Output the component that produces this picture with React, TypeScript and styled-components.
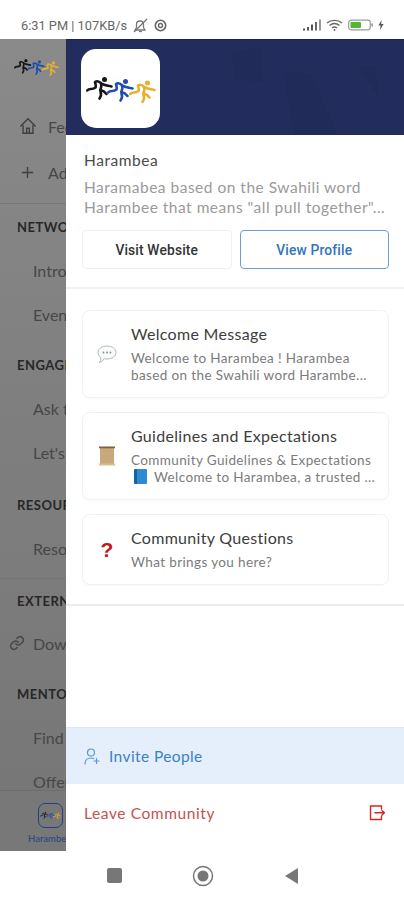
import React from "react";
import styled, { createGlobalStyle } from "styled-components";

const Global = createGlobalStyle`
  html, body { margin: 0; padding: 0; background: #fff; }
  * { box-sizing: border-box; }
  body { font-family: Lato, "Noto Sans", sans-serif; }
`;

const Page = styled.div`
  width: 404px;
  height: 900px;
  display: flex;
  flex-direction: column;
  overflow: hidden;
`;

const StatusBar = styled.div`
  height: 39px;
  flex: none;
  padding: 11px 20px 0 21px;
  display: flex;
  align-items: center;
  justify-content: space-between;
  color: #666;
  font: 400 12.8px Roboto, sans-serif;
`;
const StatusGroup = styled.div`
  display: flex;
  align-items: center;
  gap: 5px;
`;

const Main = styled.div`
  flex: 1;
  display: flex;
  min-height: 0;
`;

const Sidebar = styled.aside`
  width: 66px;
  flex: none;
  background: linear-gradient(180deg, #8a8a8a 0%, #7f7f7f 45%, #767676 100%);
  overflow: hidden;
  display: flex;
  flex-direction: column;
  white-space: nowrap;
  position: relative;
`;
const SideLogo = styled.div`
  height: 56px;
  flex: none;
  padding: 20px 0 0 14px;
`;
const SideTop = styled.div`
  height: 109px;
  flex: none;
  padding-top: 8px;
  border-bottom: 1px solid #787878;
`;
const SideRow = styled.div<{ $h?: number; $indent?: number; $gap?: number }>`
  height: ${(p) => p.$h ?? 44}px;
  flex: none;
  display: flex;
  align-items: center;
  gap: ${(p) => p.$gap ?? 11}px;
  padding-left: ${(p) => p.$indent ?? 33}px;
  font-size: 16px;
  color: #474747;
  svg {
    flex: none;
  }
`;
const SideHeading = styled.div<{ $top: number; $h?: number; $rule?: boolean }>`
  height: ${(p) => p.$h ?? 42}px;
  flex: none;
  margin-top: ${(p) => p.$top}px;
  padding-left: 17px;
  display: flex;
  align-items: center;
  font-size: 13px;
  font-weight: 700;
  letter-spacing: 0.5px;
  color: #272727;
  border-top: ${(p) => (p.$rule ? "1px solid #747474" : "none")};
`;
const SideTabs = styled.div`
  position: absolute;
  left: 0;
  right: 0;
  bottom: 0;
  height: 61px;
  background: #787878;
  border-top: 1px solid #6f6f6f;
`;
const TabIcon = styled.div`
  position: absolute;
  left: 38px;
  top: 12px;
  width: 25px;
  height: 25px;
  border: 1.5px solid #1f3f86;
  border-radius: 7px;
  display: flex;
  align-items: center;
  justify-content: center;
  overflow: hidden;
`;
const TabLabel = styled.div`
  position: absolute;
  left: 28px;
  top: 42px;
  font-size: 9.5px;
  font-weight: 500;
  color: #2c477f;
`;

const Drawer = styled.div`
  flex: 1;
  min-width: 0;
  background: #fff;
  display: flex;
  flex-direction: column;
`;

const Header = styled.div`
  height: 96px;
  flex: none;
  padding: 9px 15px;
  background: #232d5d;
  border-top: 1px solid #1b2350;
  position: relative;
  overflow: hidden;
`;
const HeaderArt = styled.svg`
  position: absolute;
  inset: 0;
  width: 100%;
  height: 100%;
`;
const LogoTile = styled.div`
  position: relative;
  width: 79px;
  height: 79px;
  border-radius: 15px;
  background: #fff;
  padding-top: 3px;
  display: flex;
  align-items: center;
  justify-content: center;
`;

const About = styled.section`
  padding: 16px 15px 0 18px;
  height: 154px;
  flex: none;
  border-bottom: 2px solid #f1f1f1;
`;
const AboutTitle = styled.div`
  font-size: 15.5px;
  line-height: 19px;
  letter-spacing: 0.55px;
  color: #4a4a4a;
`;
const AboutText = styled.div`
  margin-top: 7px;
  font-size: 15.5px;
  line-height: 20px;
  letter-spacing: 0.5px;
  color: #9a9a9a;
  white-space: nowrap;
`;
const ButtonRow = styled.div`
  margin: 13px 0 0 -2px;
  display: flex;
  gap: 8px;
`;
const Button = styled.div<{ $primary?: boolean }>`
  width: 150px;
  height: 39px;
  border-radius: 4px;
  display: flex;
  align-items: center;
  justify-content: center;
  font: 500 13.8px Roboto, sans-serif;
  letter-spacing: 0.15px;
  color: ${(p) => (p.$primary ? "#2f74bd" : "#333")};
  border: ${(p) => (p.$primary ? "1.5px solid #6f9fd0" : "1px solid #f0f0f0")};
`;

const Cards = styled.section`
  height: 317px;
  flex: none;
  padding: 21px 15px 0 16px;
  display: flex;
  flex-direction: column;
  gap: 14px;
  border-bottom: 2px solid #ececec;
`;
const Card = styled.article<{ $h: number }>`
  height: ${(p) => p.$h}px;
  flex: none;
  border: 1px solid #f1f1f1;
  border-radius: 8px;
  display: flex;
  align-items: center;
  padding-left: 13px;
  box-shadow: 0 1px 2px rgba(0, 0, 0, 0.03);
`;
const CardIcon = styled.div`
  width: 22px;
  flex: none;
  margin-right: 13px;
  display: flex;
  justify-content: center;
  font-size: 21px;
  line-height: 1;
`;
const CardBody = styled.div`
  min-width: 0;
  white-space: nowrap;
`;
const CardTitle = styled.div`
  font-size: 16px;
  line-height: 20px;
  letter-spacing: 0.3px;
  color: #3d3d3d;
`;
const CardText = styled.div`
  margin-top: 6px;
  font-size: 13.5px;
  line-height: 17.5px;
  letter-spacing: 0.38px;
  color: #7b7b7b;
`;
const QuestionMark = styled.span`
  font: 700 21px "Liberation Sans", sans-serif;
  color: #c4161c;
`;

const Spacer = styled.div`
  flex: 1;
`;

const InviteRow = styled.div`
  height: 57px;
  flex: none;
  background: #e4effb;
  border-top: 1px solid #d8e7f8;
  padding-left: 18px;
  display: flex;
  align-items: center;
  gap: 9px;
  font-size: 15.5px;
  letter-spacing: 0.4px;
  color: #3b82c4;
`;
const LeaveRow = styled.div`
  height: 67px;
  flex: none;
  padding: 0 18px 10px 18px;
  display: flex;
  align-items: center;
  justify-content: space-between;
  font-size: 15.5px;
  letter-spacing: 0.6px;
  color: #c4524e;
`;

const NavBar = styled.nav`
  height: 49px;
  flex: none;
  display: flex;
  align-items: center;
  padding-left: 107px;
  gap: 70px;
`;
const NavSquare = styled.div`
  width: 15px;
  height: 15px;
  background: #777;
  border-radius: 2px;
`;

const Runner = ({ color, x, y }: { color: string; x: number; y: number }) => (
  <g
    transform={`translate(${x} ${y})`}
    stroke={color}
    fill="none"
    strokeWidth="2.6"
    strokeLinecap="round"
    strokeLinejoin="round"
  >
    <path d="M1.2 13.5 C3.5 10.5 6 13.5 9.5 10.5 C10.5 8.5 9 6.5 9 5 C11 3.6 13.5 4.6 15.5 6.5 C18 8.5 21.5 8.5 25.5 9.5" />
    <path d="M15 7 C16.5 10 13.5 12 14.5 14.5 C15.5 17 15.5 19 13.5 21.5" />
    <path d="M14.5 13 C17 13.5 19 15 20.5 17" />
    <circle cx="18.5" cy="2.6" r="2.5" fill={color} stroke="none" />
  </g>
);

const Logo = ({ width }: { width: number }) => (
  <svg width={width} height={(width * 26) / 70} viewBox="0 0 70 26">
    <Runner color="#15151c" x={0} y={0} />
    <Runner color="#1f4fa8" x={21} y={2} />
    <Runner color="#e6b02e" x={43} y={3.5} />
  </svg>
);

const BellOff = () => (
  <svg width="17" height="15" viewBox="0 0 17 15" fill="none" stroke="#777" strokeWidth="1.3">
    <path d="M3 12 H13 L11.5 9.5 V6.5 C11.5 4.5 10 3 8 3 C6 3 4.5 4.5 4.5 6.5 V9.5 Z" />
    <path d="M2 14 L15 1" />
    <path d="M7 13.5 H10" />
  </svg>
);
const Sync = () => (
  <svg width="13" height="13" viewBox="0 0 13 13" fill="none" stroke="#666">
    <circle cx="6.5" cy="6.5" r="5.2" strokeWidth="1.6" />
    <circle cx="6.5" cy="6.5" r="2" strokeWidth="1.4" />
  </svg>
);
const Signal = () => (
  <svg width="18" height="12" viewBox="0 0 18 12" fill="#555">
    <rect x="0" y="9.5" width="2" height="2" />
    <rect x="4" y="8" width="2" height="3.5" />
    <rect x="8" y="5.5" width="2" height="6" />
    <rect x="12" y="3" width="2" height="8.5" fill="#666" />
    <rect x="16" y="0.5" width="2" height="11" fill="#999" />
  </svg>
);
const Wifi = () => (
  <svg width="17" height="13" viewBox="0 0 17 13" fill="none" stroke="#666" strokeWidth="1.4">
    <path d="M1 4 C5 0.5 12 0.5 16 4" />
    <path d="M3.5 6.5 C6.5 4 10.5 4 13.5 6.5" />
    <path d="M6 9 C7.5 7.8 9.5 7.8 11 9" />
    <circle cx="8.5" cy="11" r="1" fill="#666" stroke="none" />
  </svg>
);
const Battery = () => (
  <svg width="25" height="12" viewBox="0 0 25 12">
    <rect x="0.7" y="1.2" width="21.6" height="9.6" rx="2.5" fill="#fff" stroke="#9a9a9a" strokeWidth="1.2" />
    <rect x="2.5" y="3" width="10.5" height="6" rx="1" fill="#55b52f" />
    <rect x="23.3" y="4.2" width="1.6" height="3.6" rx="0.8" fill="#999" />
  </svg>
);
const Bolt = () => (
  <svg width="6" height="10" viewBox="0 0 6 10" fill="#555">
    <path d="M3.6 0 L0.4 5.6 H2.6 L2 10 L5.6 4 H3.2 Z" />
  </svg>
);

const Home = () => (
  <svg width="18" height="18" viewBox="0 0 20 20" fill="none" stroke="#3f3f3f" strokeWidth="1.5">
    <path d="M1.5 10.5 L10 2 L18.5 10.5" />
    <path d="M4.5 8.5 V18 H15.5 V8.5" />
    <path d="M8.5 18 V12.5 H11.5 V18" />
  </svg>
);
const Plus = () => (
  <svg width="13" height="13" viewBox="0 0 14 14" stroke="#3f3f3f" strokeWidth="1.4">
    <path d="M7 1 V13 M1 7 H13" />
  </svg>
);
const LinkIcon = () => (
  <svg width="16" height="16" viewBox="0 0 24 24" fill="none" stroke="#474747" strokeWidth="2.2" strokeLinecap="round">
    <path d="M10 13a5 5 0 0 0 7.5.5l3-3a5 5 0 0 0-7-7l-1.7 1.7" />
    <path d="M14 11a5 5 0 0 0-7.5-.5l-3 3a5 5 0 0 0 7 7l1.7-1.7" />
  </svg>
);

const Bubble = () => (
  <svg width="20" height="19" viewBox="0 0 20 19">
    <path d="M10 1 C15 1 19 3.6 19 7.5 C19 11.4 15 14 10 14 C9 14 8 13.9 7 13.6 C6 15.5 4.5 17 2.5 17.5 C3.5 16 4 14.3 3.6 12.4 C2 11.2 1 9.5 1 7.5 C1 3.6 5 1 10 1 Z" fill="#fafbfb" stroke="#b4b9bb" strokeWidth="1" />
    <circle cx="6.5" cy="7.5" r="0.9" fill="#7f8b90" />
    <circle cx="10" cy="7.5" r="0.9" fill="#7f8b90" />
    <circle cx="13.5" cy="7.5" r="0.9" fill="#7f8b90" />
  </svg>
);
const Scroll = () => (
  <svg width="18" height="20" viewBox="0 0 18 20">
    <rect x="2" y="1" width="14" height="18" fill="#c9a97c" />
    <rect x="1" y="0.5" width="16" height="1.8" fill="#7d6240" />
    <rect x="1" y="17.5" width="16" height="2" fill="#d9bd94" />
  </svg>
);
const Book = styled.span`
  display: inline-block;
  width: 13px;
  height: 15px;
  margin: 0 7px -2px 3px;
  background: linear-gradient(90deg, #14639f 0 25%, #2f8ad6 25%);
  border-radius: 1px;
`;
const InviteIcon = () => (
  <svg width="16" height="17" viewBox="0 0 16 17" fill="none" stroke="#5a98d2" strokeWidth="1.2" strokeLinecap="round">
    <circle cx="7" cy="4.5" r="3.5" />
    <path d="M1 16 C1 12 3.5 10 7 10 C8 10 9 10.2 9.7 10.5" />
    <path d="M12.5 10.5 V15.5 M10 13 H15" />
  </svg>
);
const LeaveIcon = () => (
  <svg width="17" height="17" viewBox="0 0 17 17" fill="none" stroke="#cf2a26" strokeWidth="1.4" strokeLinecap="round" strokeLinejoin="round">
    <path d="M12.5 5 V2 H1.5 V15.5 H12.5 V12" />
    <path d="M6 8.7 H15.5 M13 6.5 L15.5 8.7 L13 11" />
  </svg>
);
const Record = () => (
  <svg width="22" height="22" viewBox="0 0 22 22">
    <circle cx="11" cy="11" r="9.5" fill="none" stroke="#777" strokeWidth="1.5" />
    <circle cx="11" cy="11" r="5.5" fill="#777" />
  </svg>
);
const Back = () => (
  <svg width="15" height="18" viewBox="0 0 15 18" fill="#777">
    <path d="M14 1 V17 L1 9 Z" />
  </svg>
);

export default function App() {
  return (
    <Page>
      <Global />
      <StatusBar>
        <StatusGroup>
          <span>6:31 PM | 107KB/s</span>
          <BellOff />
          <Sync />
        </StatusGroup>
        <StatusGroup>
          <Signal />
          <Wifi />
          <Battery />
          <Bolt />
        </StatusGroup>
      </StatusBar>
      <Main>
        <Sidebar>
          <SideLogo>
            <Logo width={45} />
          </SideLogo>
          <SideTop>
            <SideRow $h={46} $indent={19}>
              <Home />
              <span>Feed</span>
            </SideRow>
            <SideRow $h={46} $indent={21} $gap={14}>
              <Plus />
              <span>Add</span>
            </SideRow>
          </SideTop>
          <SideHeading $top={2}>NETWORK</SideHeading>
          <SideRow>Introductions</SideRow>
          <SideRow>Events</SideRow>
          <SideHeading $top={8}>ENGAGE</SideHeading>
          <SideRow>Ask the Community</SideRow>
          <SideRow>Let's Talk</SideRow>
          <SideHeading $top={10}>RESOURCES</SideHeading>
          <SideRow>Resources</SideRow>
          <SideHeading $top={8} $rule $h={44}>EXTERNAL</SideHeading>
          <SideRow $h={42} $indent={9} $gap={8}>
            <LinkIcon />
            <span>Download</span>
          </SideRow>
          <SideHeading $top={9}>MENTORSHIP</SideHeading>
          <SideRow>Find a Mentor</SideRow>
          <SideRow>Offer</SideRow>
          <SideTabs>
            <TabIcon>
              <Logo width={21} />
            </TabIcon>
            <TabLabel>Harambea</TabLabel>
          </SideTabs>
        </Sidebar>
        <Drawer>
          <Header>
            <HeaderArt viewBox="0 0 338 96" preserveAspectRatio="none">
              <path d="M165 12 L195 8 L197 42 L170 40 Z" fill="#1f2856" opacity="0.4" />
              <path d="M217 32 L245 34 L272 96 L228 96 Z" fill="#1f2856" opacity="0.4" />
              <path d="M294 28 L310 26 L311 56 Z" fill="#1f2856" opacity="0.4" />
            </HeaderArt>
            <LogoTile>
              <Logo width={70} />
            </LogoTile>
          </Header>
          <About>
            <AboutTitle>Harambea</AboutTitle>
            <AboutText>
              Haramabea based on the Swahili word
              <br />
              Harambee that means "all pull together"...
            </AboutText>
            <ButtonRow>
              <Button>Visit Website</Button>
              <Button $primary>View Profile</Button>
            </ButtonRow>
          </About>
          <Cards>
            <Card $h={88}>
              <CardIcon>
                <Bubble />
              </CardIcon>
              <CardBody>
                <CardTitle>Welcome Message</CardTitle>
                <CardText>
                  Welcome to Harambea ! Harambea
                  <br />
                  based on the Swahili word Harambe...
                </CardText>
              </CardBody>
            </Card>
            <Card $h={88}>
              <CardIcon>
                <Scroll />
              </CardIcon>
              <CardBody>
                <CardTitle>Guidelines and Expectations</CardTitle>
                <CardText>
                  Community Guidelines &amp; Expectations
                  <br />
                  <Book />
                  Welcome to Harambea, a trusted ...
                </CardText>
              </CardBody>
            </Card>
            <Card $h={71}>
              <CardIcon>
                <QuestionMark>?</QuestionMark>
              </CardIcon>
              <CardBody>
                <CardTitle>Community Questions</CardTitle>
                <CardText>What brings you here?</CardText>
              </CardBody>
            </Card>
          </Cards>
          <Spacer />
          <InviteRow>
            <InviteIcon />
            <span>Invite People</span>
          </InviteRow>
          <LeaveRow>
            <span>Leave Community</span>
            <LeaveIcon />
          </LeaveRow>
        </Drawer>
      </Main>
      <NavBar>
        <NavSquare />
        <Record />
        <Back />
      </NavBar>
    </Page>
  );
}
